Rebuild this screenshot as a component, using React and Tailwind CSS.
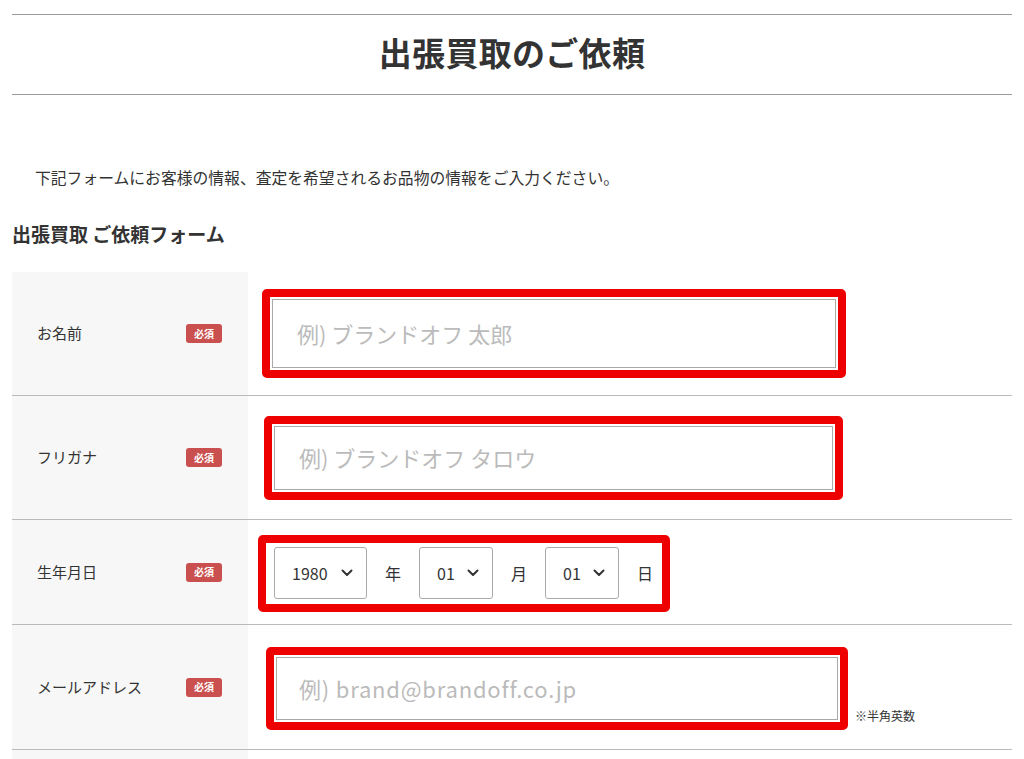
import React from "react";

const font = { fontFamily: '"Noto Sans CJK JP", "Noto Sans", sans-serif' };

const Badge = () => (
  <span className="inline-flex items-center justify-center w-[36px] h-[19px] rounded-[3px] bg-[#c9504e] text-white text-[10px] font-bold leading-none">
    必須
  </span>
);

const Label = ({ children }) => (
  <div className="w-[236px] shrink-0 bg-[#f7f7f7] flex items-center justify-between pl-[25px] pr-[26px] text-[15px] text-[#333]">
    <span>{children}</span>
    <Badge />
  </div>
);

const Chevron = () => (
  <svg width="14" height="14" viewBox="0 0 14 14" className="text-[#333]">
    <path d="M2.5 4.5 L7 9 L11.5 4.5" fill="none" stroke="currentColor" strokeWidth="2" strokeLinecap="round" strokeLinejoin="round" />
  </svg>
);

const Select = ({ value, width }) => (
  <div className={`${width} h-[52px] border border-[#aaa] rounded-[3px] flex items-center justify-between pl-[17px] pr-[12px] text-[16px] text-[#333] bg-white`}>
    <span>{value}</span>
    <Chevron />
  </div>
);

const App = () => {
  return (
    <div className="w-[1024px] bg-white px-[12px] pt-[14px]" style={font}>
      <div className="border-t-[1.5px] border-b-[1.5px] border-[#999] h-[81px] flex items-center justify-center">
        <h1 className="text-[33px] font-bold text-[#333] tracking-[0.3px] -mt-[3px]">出張買取のご依頼</h1>
      </div>

      <p className="mt-[71px] pl-[23px] text-[15.8px] text-[#333] leading-[24px]">
        下記フォームにお客様の情報、査定を希望されるお品物の情報をご入力ください。
      </p>

      <h2 className="mt-[32px] text-[19px] font-bold text-[#333] leading-[24px]">出張買取 ご依頼フォーム</h2>

      <div className="mt-[26px]">
        <div className="flex h-[124px] border-b border-[#bbb]">
          <Label>お名前</Label>
          <div className="flex items-center pl-[14px]">
            <div className="w-[584px] h-[89px] border-[8px] border-[#ee0000] rounded-[5px] p-[2px]">
              <div className="w-full h-full border border-[#aaa] flex items-center pl-[24px] text-[22px] text-[#bbb]">
                例) ブランドオフ 太郎
              </div>
            </div>
          </div>
        </div>

        <div className="flex h-[124px] border-b border-[#bbb]">
          <Label>フリガナ</Label>
          <div className="flex items-center pl-[16px]">
            <div className="w-[579px] h-[84px] border-[8px] border-[#ee0000] rounded-[5px] p-[2px]">
              <div className="w-full h-full border border-[#aaa] flex items-center pl-[24px] text-[22px] text-[#bbb]">
                例) ブランドオフ タロウ
              </div>
            </div>
          </div>
        </div>

        <div className="flex h-[105px] border-b border-[#bbb]">
          <Label>生年月日</Label>
          <div className="flex items-center pl-[10px] pt-[2px]">
            <div className="h-[77px] border-[8px] border-[#ee0000] rounded-[5px] pl-[8px] pr-[9px] flex items-center gap-[18px] text-[16px] text-[#333]">
              <Select value="1980" width="w-[93px]" />
              <span>年</span>
              <Select value="01" width="w-[74px]" />
              <span>月</span>
              <Select value="01" width="w-[74px]" />
              <span>日</span>
            </div>
          </div>
        </div>

        <div className="flex h-[125px] border-b border-[#bbb]">
          <Label>メールアドレス</Label>
          <div className="flex items-center pl-[18px] pt-[2px]">
            <div className="w-[582px] h-[83px] border-[8px] border-[#ee0000] rounded-[5px] p-[2px]">
              <div className="w-full h-full border border-[#aaa] flex items-center pl-[22px] text-[22px] text-[#bbb] tracking-[0.8px]">
                例) brand@brandoff.co.jp
              </div>
            </div>
            <span className="self-end mb-[24px] ml-[7px] text-[12px] text-[#333]">※半角英数</span>
          </div>
        </div>

        <div className="flex h-[40px]">
          <div className="w-[236px] bg-[#f7f7f7]" />
        </div>
      </div>
    </div>
  );
};

export default App;
